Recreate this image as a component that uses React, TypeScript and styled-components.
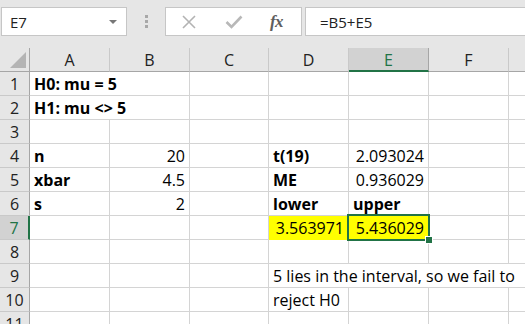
import React from "react";
import styled, { createGlobalStyle } from "styled-components";

const GREEN = "#217346";
const GRID = "#d4d4d4";
const HEAD_BG = "#e6e6e6";
const HEAD_LINE = "#c9c9c9";
const EDGE = "#a6a6a6";

const GlobalStyle = createGlobalStyle`
  html, body { margin: 0; padding: 0; background: #fff; overflow: hidden; }
  body { font-family: "Open Sans", Lato, "Liberation Sans", sans-serif; color: #000; }
`;

const Page = styled.div`
  width: 525px;
  height: 324px;
  overflow: hidden;
  background: ${HEAD_BG};
  display: flex;
  flex-direction: column;
`;

const FormulaBar = styled.div`
  height: 48px;
  flex-shrink: 0;
  box-sizing: border-box;
  padding: 7px 0 0 1px;
  display: flex;
  align-items: flex-start;
`;

const NameBox = styled.div`
  width: 126px;
  height: 29px;
  box-sizing: border-box;
  background: #fff;
  border: 1px solid #c6c6c6;
  display: flex;
  align-items: center;
  justify-content: space-between;
  padding: 0 9px 0 8px;
  font-size: 15px;
  color: #222;
`;

const DropArrow = styled.span`
  width: 0;
  height: 0;
  border-left: 4px solid transparent;
  border-right: 4px solid transparent;
  border-top: 4px solid #777;
`;

const Grip = styled.div`
  width: 38px;
  height: 29px;
  display: flex;
  flex-direction: column;
  align-items: center;
  justify-content: center;
  gap: 2px;
  & > span {
    width: 3px;
    height: 3px;
    background: #a8a8a8;
  }
`;

const ButtonBox = styled.div`
  width: 137px;
  height: 29px;
  box-sizing: border-box;
  background: #fff;
  border: 1px solid #c6c6c6;
  display: flex;
  align-items: center;
`;

const IconSlot = styled.div`
  width: 45px;
  height: 27px;
  display: flex;
  align-items: center;
  justify-content: center;
`;

const Fx = styled.span`
  font-family: "Liberation Serif", "DejaVu Serif", serif;
  font-style: italic;
  font-weight: 700;
  font-size: 17px;
  color: #5e5e5e;
  letter-spacing: -0.5px;
  margin-right: 4px;
`;

const FormulaInput = styled.div`
  flex: 1;
  margin-left: 3px;
  height: 29px;
  box-sizing: border-box;
  background: #fff;
  border: 1px solid #c6c6c6;
  border-right: none;
  display: flex;
  align-items: center;
  padding-left: 14px;
  font-size: 15px;
  color: #222;
`;

const Sheet = styled.div`
  flex: 1;
  display: grid;
  grid-template-columns: 30px 80px 80px 79px 80px 80px 80px 80px;
  grid-auto-rows: 24px;
  background: #fff;
  overflow: hidden;
`;

const Corner = styled.div`
  background: ${HEAD_BG};
  border-right: 1px solid ${EDGE};
  border-bottom: 1px solid ${EDGE};
  box-sizing: border-box;
  display: flex;
  align-items: flex-end;
  justify-content: flex-end;
  padding: 0 3px 3px 0;
  &::after {
    content: "";
    width: 16px;
    height: 16px;
    background: #b4b4b4;
    clip-path: polygon(100% 0, 100% 100%, 0 100%);
  }
`;

const ColHead = styled.div<{ $active?: boolean }>`
  background: ${(p) => (p.$active ? "#d2d2d2" : HEAD_BG)};
  box-sizing: border-box;
  border-right: 1px solid ${(p) => (p.$active ? EDGE : HEAD_LINE)};
  border-bottom: ${(p) => (p.$active ? `2px solid ${GREEN}` : `1px solid ${EDGE}`)};
  display: flex;
  align-items: center;
  justify-content: center;
  padding-top: ${(p) => (p.$active ? "1px" : "0")};
  font-size: 16px;
  color: ${(p) => (p.$active ? GREEN : "#222")};
`;

const RowHead = styled.div<{ $active?: boolean }>`
  background: ${(p) => (p.$active ? "#d2d2d2" : HEAD_BG)};
  box-sizing: border-box;
  border-right: ${(p) => (p.$active ? `2px solid ${GREEN}` : `1px solid ${EDGE}`)};
  border-bottom: 1px solid ${HEAD_LINE};
  display: flex;
  align-items: center;
  justify-content: center;
  font-size: 16px;
  color: ${(p) => (p.$active ? GREEN : "#222")};
`;

const Cell = styled.div<{
  $span?: number;
  $right?: boolean;
  $bold?: boolean;
  $fill?: string;
  $active?: boolean;
}>`
  position: relative;
  grid-column: span ${(p) => p.$span ?? 1};
  box-sizing: border-box;
  border-right: 1px solid ${(p) => p.$fill ?? GRID};
  border-bottom: 1px solid ${(p) => p.$fill ?? GRID};
  background: ${(p) => p.$fill ?? "#fff"};
  padding: 1px 4px 0;
  line-height: 22px;
  font-size: 16px;
  font-weight: ${(p) => (p.$bold ? 700 : 400)};
  text-align: ${(p) => (p.$right ? "right" : "left")};
  white-space: nowrap;
  overflow: visible;
  z-index: ${(p) => (p.$active ? 2 : 1)};

  ${(p) =>
    p.$active &&
    `
    &::before {
      content: "";
      position: absolute;
      left: -2px;
      top: -2px;
      right: -2px;
      bottom: -2px;
      border: 2px solid ${GREEN};
      pointer-events: none;
    }
    &::after {
      content: "";
      position: absolute;
      right: -5px;
      bottom: -5px;
      width: 6px;
      height: 6px;
      background: ${GREEN};
      border: 1px solid #fff;
    }
  `}
`;

type CellSpec = {
  text?: string;
  span?: number;
  right?: boolean;
  bold?: boolean;
  fill?: string;
  active?: boolean;
};

const COLS = ["A", "B", "C", "D", "E", "F", "G"];
const YELLOW = "#ffff00";

// sparse sheet contents, keyed by row then column index
const data: Record<number, Record<number, CellSpec>> = {
  1: { 0: { text: "H0: mu = 5", bold: true, span: 2 } },
  2: { 0: { text: "H1: mu <> 5", bold: true, span: 2 } },
  4: {
    0: { text: "n", bold: true },
    1: { text: "20", right: true },
    3: { text: "t(19)", bold: true },
    4: { text: "2.093024", right: true },
  },
  5: {
    0: { text: "xbar", bold: true },
    1: { text: "4.5", right: true },
    3: { text: "ME", bold: true },
    4: { text: "0.936029", right: true },
  },
  6: {
    0: { text: "s", bold: true },
    1: { text: "2", right: true },
    3: { text: "lower", bold: true },
    4: { text: "upper", bold: true },
  },
  7: {
    3: { text: "3.563971", right: true, fill: YELLOW },
    4: { text: "5.436029", right: true, fill: YELLOW, active: true },
  },
  9: { 3: { text: "5 lies in the interval, so we fail to", span: 4 } },
  10: { 3: { text: "reject H0" } },
};

const XIcon = () => (
  <svg width="16" height="14" viewBox="0 0 16 14">
    <path d="M2 1 L14 13 M14 1 L2 13" stroke="#b3b3b3" strokeWidth="1.6" fill="none" />
  </svg>
);

const CheckIcon = () => (
  <svg width="18" height="14" viewBox="0 0 18 14">
    <path d="M1.5 7 L6.5 12 L16.5 1.5" stroke="#b8b8b8" strokeWidth="2.6" fill="none" />
  </svg>
);

function renderRow(r: number) {
  const row = data[r] ?? {};
  const cells: React.ReactNode[] = [];
  let c = 0;
  while (c < COLS.length) {
    const spec = row[c] ?? {};
    cells.push(
      <Cell
        key={`${r}-${c}`}
        $span={spec.span}
        $right={spec.right}
        $bold={spec.bold}
        $fill={spec.fill}
        $active={spec.active}
      >
        {spec.text}
      </Cell>
    );
    c += spec.span ?? 1;
  }
  return [
    <RowHead key={`h${r}`} $active={r === 7}>
      {r}
    </RowHead>,
    ...cells,
  ];
}

export default function App() {
  const rows = Array.from({ length: 11 }, (_, i) => i + 1);
  return (
    <Page>
      <GlobalStyle />
      <FormulaBar>
        <NameBox>
          E7
          <DropArrow />
        </NameBox>
        <Grip>
          <span />
          <span />
          <span />
        </Grip>
        <ButtonBox>
          <IconSlot>
            <XIcon />
          </IconSlot>
          <IconSlot>
            <CheckIcon />
          </IconSlot>
          <IconSlot>
            <Fx>fx</Fx>
          </IconSlot>
        </ButtonBox>
        <FormulaInput>=B5+E5</FormulaInput>
      </FormulaBar>
      <Sheet>
        <Corner />
        {COLS.map((col) => (
          <ColHead key={col} $active={col === "E"}>
            {/* G sits past the window edge; its letter is never seen */}
            {col === "G" ? null : col}
          </ColHead>
        ))}
        {rows.map(renderRow)}
      </Sheet>
    </Page>
  );
}
